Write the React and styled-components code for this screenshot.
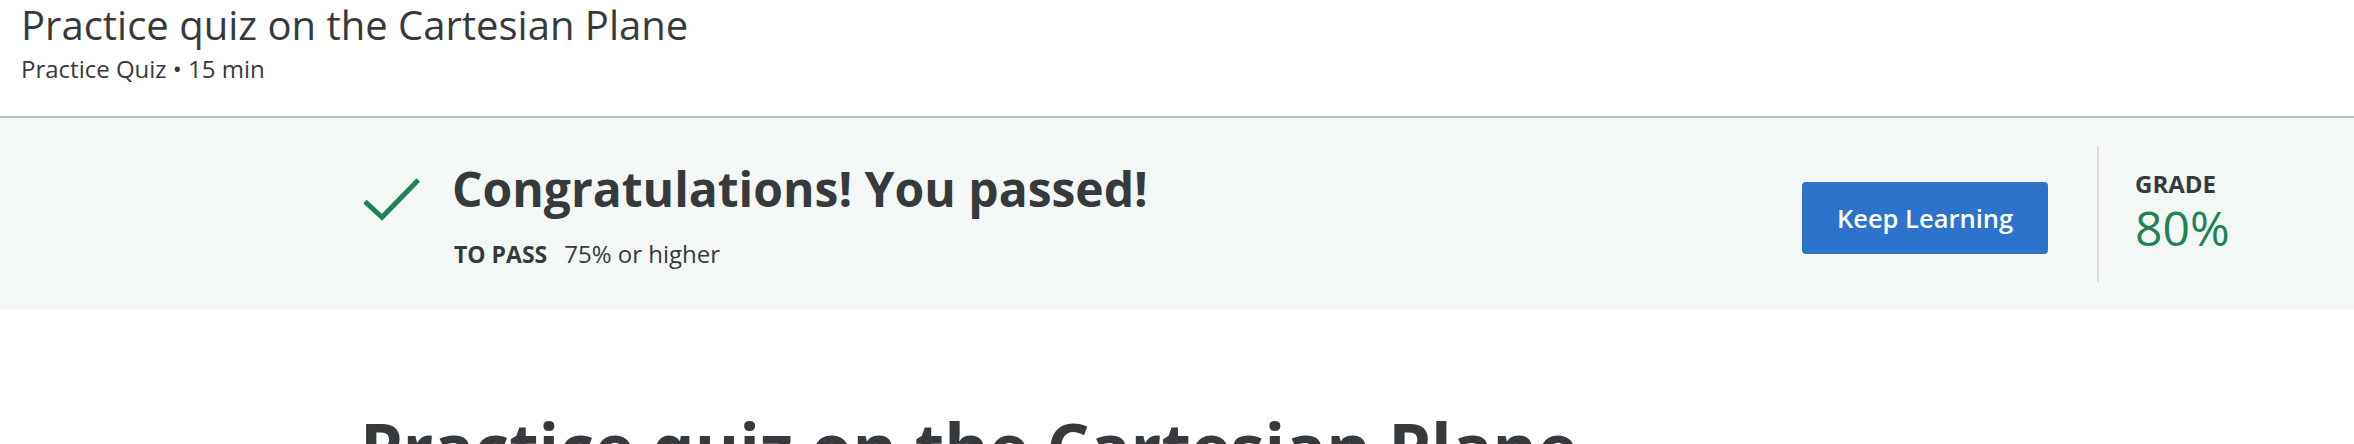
import React from 'react'
import styled, { createGlobalStyle } from 'styled-components'

const GlobalStyle = createGlobalStyle`
  body {
    margin: 0;
    background: #ffffff;
    font-family: "Open Sans", "Liberation Sans", sans-serif;
    color: #373a3c;
  }
`

const Page = styled.div`
  width: 2354px;
  height: 444px;
  overflow: hidden;
`

const Header = styled.div`
  height: 118px;
  padding: 0 21px;
  border-bottom: 2px solid #bdbdbd;
  box-sizing: border-box;
`

const Title = styled.h1`
  margin: 0;
  font-size: 40px;
  line-height: 50px;
  font-weight: 400;
`

const Meta = styled.div`
  margin-top: 1px;
  font-size: 24px;
  line-height: 36px;
`

const Banner = styled.div`
  display: flex;
  align-items: flex-start;
  background: #f3f8f7;
  padding: 28px 69px 27px 362px;
  height: 191px;
  box-sizing: border-box;
`

const Result = styled.div`
  flex: 1;
  display: flex;
  align-items: flex-start;
`

const CheckIcon = styled.svg`
  flex: none;
  margin-top: 29px;
  margin-right: 32px;
`

const ResultText = styled.div`
  margin-top: 16px;
`

const ResultHeading = styled.div`
  font-size: 48px;
  line-height: 54px;
  font-weight: 700;
`

const PassRow = styled.div`
  margin: 21px 0 0 2px;
  font-size: 24px;
  line-height: 33px;
`

const PassLabel = styled.span`
  font-size: 23px;
  font-weight: 700;
  margin-right: 17px;
`

const Button = styled.button`
  margin-top: 36px;
  width: 246px;
  height: 72px;
  border: none;
  border-radius: 4px;
  background: #2d73cc;
  color: #ffffff;
  font-family: inherit;
  font-size: 25.5px;
  font-weight: 600;
`

const Divider = styled.div`
  width: 2px;
  height: 136px;
  margin-left: 49px;
  background: #dcdcdc;
`

const Grade = styled.div`
  margin-left: 36px;
  margin-top: 23px;
  width: 150px;
`

const GradeLabel = styled.div`
  font-size: 24px;
  line-height: 30px;
  font-weight: 700;
`

const GradeValue = styled.div`
  font-size: 48px;
  line-height: 57.6px;
  color: ${props => props.color};
`

const Main = styled.div`
  padding: 96px 0 0 360px;
`

const QuizHeading = styled.h2`
  margin: 0;
  font-size: 67.8px;
  line-height: 85px;
  font-weight: 700;
`

export default function App() {
  return (
    <Page>
      <GlobalStyle />
      <Header>
        <Title>Practice quiz on the Cartesian Plane</Title>
        <Meta>Practice Quiz • 15 min</Meta>
      </Header>
      <Banner>
        <Result>
          <CheckIcon width="58" height="46" viewBox="0 0 58 46">
            <polyline points="3,26.7 20,42.3 56.3,5" fill="none" stroke="#1f8354" strokeWidth="5" />
          </CheckIcon>
          <ResultText>
            <ResultHeading>Congratulations! You passed!</ResultHeading>
            <PassRow>
              <PassLabel>TO PASS</PassLabel>
              75% or higher
            </PassRow>
          </ResultText>
        </Result>
        <Button>Keep Learning</Button>
        <Divider />
        <Grade>
          <GradeLabel>GRADE</GradeLabel>
          <GradeValue color="#1f8354">80%</GradeValue>
        </Grade>
      </Banner>
      <Main>
        <QuizHeading>Practice quiz on the Cartesian Plane</QuizHeading>
      </Main>
    </Page>
  )
}
